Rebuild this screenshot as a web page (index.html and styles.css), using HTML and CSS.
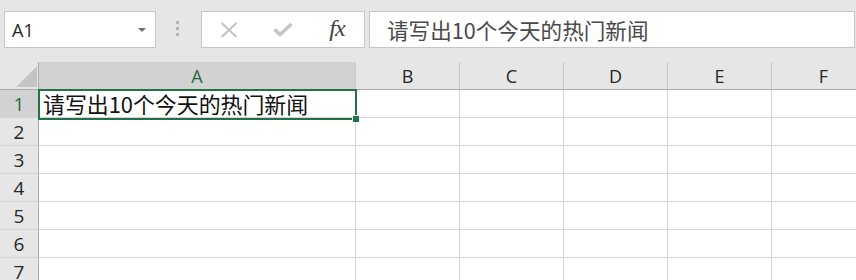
FILE: index.html
```html
<!DOCTYPE html>
<html lang="zh-CN">
<head>
<meta charset="utf-8">
<title>Sheet</title>
<link rel="stylesheet" href="styles.css">
</head>
<body>
<div class="formula-bar">
  <div class="name-box">
    <span class="name-text">A1</span>
    <svg class="dd" width="8" height="5" viewBox="0 0 8 5"><path d="M0 0H8L4 4Z" fill="#6f6f6f"/></svg>
  </div>
  <div class="grip"><i></i><i></i><i></i></div>
  <div class="fx-buttons">
    <span class="slot">
      <svg width="18" height="16" viewBox="0 0 18 16"><path d="M1.5 1L16.5 15M16.5 1L1.5 15" stroke="#c3c3c3" stroke-width="2" fill="none"/></svg>
    </span>
    <span class="slot">
      <svg width="20" height="15" viewBox="0 0 20 15"><path d="M1.5 7.5L7 12.5L18.5 2" stroke="#c6c6c6" stroke-width="3.6" fill="none" stroke-linejoin="round"/></svg>
    </span>
    <span class="slot fx">fx</span>
  </div>
  <div class="formula-input">请写出10个今天的热门新闻</div>
</div>

<div class="sheet">
  <div class="corner"><svg width="21" height="21" viewBox="0 0 21 21"><path d="M21 0V21H0Z" fill="#c4c4c4"/></svg></div>
  <div class="col-h sel">A</div>
  <div class="col-h">B</div>
  <div class="col-h">C</div>
  <div class="col-h">D</div>
  <div class="col-h">E</div>
  <div class="col-h">F</div>

  <div class="row-h sel">1</div>
  <div class="cell a1">请写出10个今天的热门新闻<div class="selection"><span class="handle"></span></div></div>
  <div class="cell"></div><div class="cell"></div><div class="cell"></div><div class="cell"></div><div class="cell"></div>

  <div class="row-h">2</div>
  <div class="cell"></div><div class="cell"></div><div class="cell"></div><div class="cell"></div><div class="cell"></div><div class="cell"></div>
  <div class="row-h">3</div>
  <div class="cell"></div><div class="cell"></div><div class="cell"></div><div class="cell"></div><div class="cell"></div><div class="cell"></div>
  <div class="row-h">4</div>
  <div class="cell"></div><div class="cell"></div><div class="cell"></div><div class="cell"></div><div class="cell"></div><div class="cell"></div>
  <div class="row-h">5</div>
  <div class="cell"></div><div class="cell"></div><div class="cell"></div><div class="cell"></div><div class="cell"></div><div class="cell"></div>
  <div class="row-h">6</div>
  <div class="cell"></div><div class="cell"></div><div class="cell"></div><div class="cell"></div><div class="cell"></div><div class="cell"></div>
  <div class="row-h">7</div>
  <div class="cell"></div><div class="cell"></div><div class="cell"></div><div class="cell"></div><div class="cell"></div><div class="cell"></div>
</div>
</body>
</html>
```

FILE: styles.css
```css
html, body {
  margin: 0;
  padding: 0;
  background: #e6e6e6;
  overflow: hidden;
}
body {
  width: 856px;
  height: 280px;
  font-family: "Open Sans", "Noto Sans", "Noto Sans CJK SC", sans-serif;
}

.formula-bar {
  height: 62px;
  box-sizing: border-box;
  padding: 11px 0 0 4px;
  display: flex;
  align-items: flex-start;
}
.name-box {
  width: 152px;
  height: 37px;
  box-sizing: border-box;
  background: #fff;
  border: 1px solid #c6c6c6;
  display: flex;
  align-items: center;
  justify-content: space-between;
  padding: 0 9px 0 7px;
}
.name-text {
  font-family: "Open Sans", "Noto Sans", sans-serif;
  font-size: 18px;
  color: #262626;
  margin-top: 1px;
}
.dd { margin-top: 1px; }

.grip {
  width: 45px;
  height: 37px;
  display: flex;
  flex-direction: column;
  align-items: center;
  justify-content: flex-start;
  gap: 3px;
  padding-top: 10px;
  box-sizing: border-box;
}
.grip i {
  display: block;
  width: 3px;
  height: 3px;
  background: #b4b4b4;
  margin-left: -2px;
}

.fx-buttons {
  width: 164px;
  height: 37px;
  box-sizing: border-box;
  background: #fff;
  border: 1px solid #c6c6c6;
  display: flex;
  align-items: center;
}
.slot {
  width: 54px;
  height: 35px;
  display: flex;
  align-items: center;
  justify-content: center;
}
.slot svg { display: block; }
.fx {
  font-family: "Liberation Serif", "DejaVu Serif", serif;
  font-style: italic;
  font-size: 24px;
  color: #404040;
  letter-spacing: -1px;
  padding-bottom: 2px;
}

.formula-input {
  margin-left: 4px;
  width: 486px;
  height: 37px;
  box-sizing: border-box;
  background: #fff;
  border: 1px solid #c6c6c6;
  padding-left: 17px;
  display: flex;
  align-items: center;
  font-family: "Noto Sans CJK SC", sans-serif;
  font-size: 21.6px;
  color: #4a4a4a;
}

.sheet {
  display: grid;
  grid-template-columns: 39px 317px repeat(5, 104px);
  grid-auto-rows: 28px;
  width: 936px;
}
.corner {
  background: #e6e6e6;
  border-right: 1px solid #ababab;
  border-bottom: 1px solid #ababab;
  box-sizing: border-box;
  position: relative;
}
.corner svg {
  position: absolute;
  left: 16px;
  top: 4px;
}
.col-h {
  background: #e6e6e6;
  border-bottom: 1px solid #ababab;
  border-right: 1px solid #c8c8c8;
  box-sizing: border-box;
  display: flex;
  align-items: center;
  justify-content: center;
  font-family: "Open Sans", "Noto Sans", sans-serif;
  font-size: 18px;
  color: #262626;
  padding-top: 1px;
}
.col-h.sel {
  background: #d2d2d2;
  color: #1f6b41;
}
.row-h {
  background: #e6e6e6;
  border-right: 1px solid #ababab;
  border-bottom: 1px solid #d4d4d4;
  box-sizing: border-box;
  display: flex;
  align-items: center;
  justify-content: center;
  font-family: "Open Sans", "Noto Sans", sans-serif;
  font-size: 19px;
  color: #262626;
  padding-top: 1px;
}
.row-h.sel {
  background: #d2d2d2;
  color: #1f6b41;
}
.cell {
  background: #fff;
  border-right: 1px solid #d4d4d4;
  border-bottom: 1px solid #d4d4d4;
  box-sizing: border-box;
}
.a1 {
  position: relative;
  font-family: "Noto Sans CJK SC", sans-serif;
  font-size: 21.9px;
  color: #111;
  padding: 0 0 0 4px;
  line-height: 28px;
  white-space: nowrap;
}
.selection {
  position: absolute;
  left: -1px;
  top: -1px;
  width: 319px;
  height: 31px;
  box-sizing: border-box;
  border: 2px solid #217346;
}
.handle {
  position: absolute;
  right: -4px;
  bottom: -4px;
  width: 6px;
  height: 6px;
  background: #217346;
  border: 1px solid #fff;
  border-right: none;
  border-bottom: none;
}
```
